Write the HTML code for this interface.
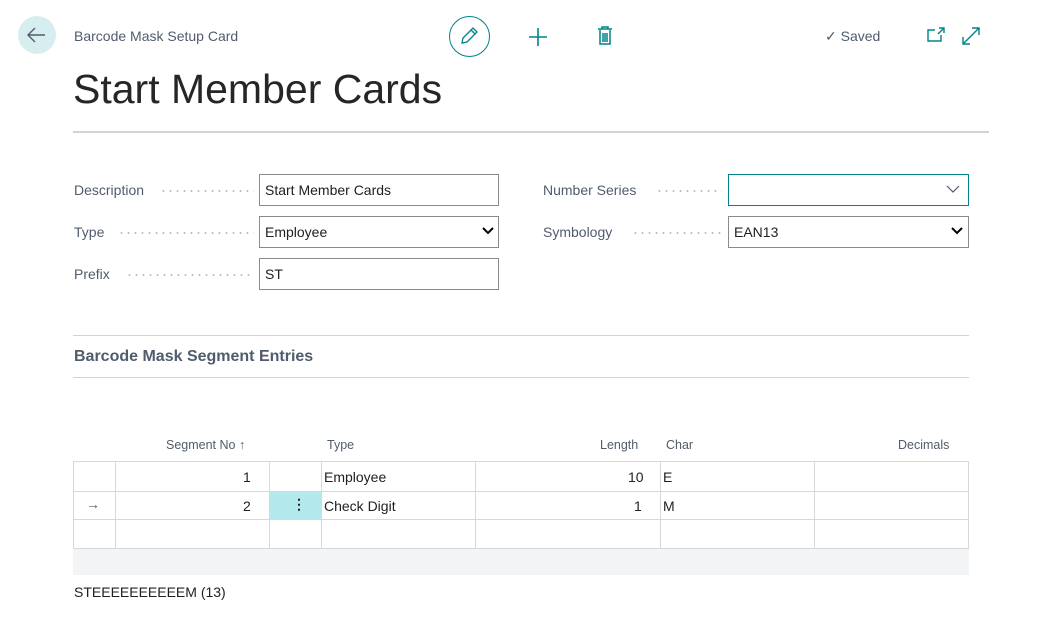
<!DOCTYPE html>
<html><head><style>
body{margin:0;width:1062px;height:624px;background:#fff;font-family:"Liberation Sans",sans-serif;color:#212121;position:relative;overflow:hidden}
.a{position:absolute}
.lbl{font-size:14px;color:#505c6d}
.dots{height:2px;background:radial-gradient(circle,#bbb 0.8px,transparent 1px) 0 0/7px 2px repeat-x}
.inp{position:absolute;border:1px solid #8a8a8a;box-sizing:border-box;height:32px;font-size:14px;padding:7px 0 0 5px;color:#212121}
.hd{font-size:12.5px;color:#505c6d}
.cell{position:absolute;font-size:14px}
</style></head><body>
<div class="a" style="left:18px;top:16px;width:38px;height:38px;border-radius:50%;background:#d6eef0"></div>
<svg class="a" style="left:25px;top:25px" width="22" height="20"><path d="M20 10H3M10 3L3 10l7 7" fill="none" stroke="#505c6d" stroke-width="1.4"/></svg>
<div class="a lbl" style="left:74px;top:28px">Barcode Mask Setup Card</div>
<div class="a" style="left:449px;top:16px;width:39px;height:39px;border-radius:50%;border:1px solid #008489"></div>
<svg class="a" style="left:459px;top:26px" width="20" height="20"><path d="M3 17l1-5L14 2l4 4L8 16zM12 4l4 4" fill="none" stroke="#008489" stroke-width="1.3"/></svg>
<svg class="a" style="left:528px;top:27px" width="20" height="20"><path d="M10 1v18M1 10h18" stroke="#008489" stroke-width="1.6"/></svg>
<svg class="a" style="left:597px;top:26px" width="16" height="20"><path d="M1 3h14M5 3V1h6v2M3 4v14h10V4M6 7v9M8 7v9M10 7v9" fill="none" stroke="#008489" stroke-width="1.5"/></svg>
<div class="a" style="left:825px;top:28px;font-size:14px;color:#505c6d">✓ Saved</div>
<svg class="a" style="left:926px;top:26px" width="20" height="18"><path d="M9 4H2v11h13V9M13 2h5v5M18 2l-6 6" fill="none" stroke="#008489" stroke-width="1.4"/></svg>
<svg class="a" style="left:961px;top:26px" width="20" height="20"><path d="M2 18L18 2M11 2h7v7M2 11v7h7" fill="none" stroke="#008489" stroke-width="1.4"/></svg>
<div class="a" style="left:73px;top:66px;font-size:41px;color:#262626;letter-spacing:0px">Start Member Cards</div>
<div class="a" style="left:73px;top:131px;width:916px;height:2px;background:#d0d3d8"></div>

<div class="a lbl" style="left:74px;top:182px">Description</div><div class="a dots" style="left:160px;top:190px;width:94px"></div>
<div class="inp" style="left:259px;top:174px;width:240px">Start Member Cards</div>
<div class="a lbl" style="left:74px;top:224px">Type</div><div class="a dots" style="left:118px;top:232px;width:136px"></div>
<div class="inp" style="left:259px;top:216px;width:240px">Employee</div>
<svg class="a" style="left:482px;top:227px" width="12" height="8"><path d="M1 1l5 5 5-5" fill="none" stroke="#000" stroke-width="2"/></svg>
<div class="a lbl" style="left:74px;top:266px">Prefix</div><div class="a dots" style="left:126px;top:274px;width:128px"></div>
<div class="inp" style="left:259px;top:258px;width:240px">ST</div>

<div class="a lbl" style="left:543px;top:182px">Number Series</div><div class="a dots" style="left:656px;top:190px;width:66px"></div>
<div class="inp" style="left:728px;top:174px;width:241px;border-color:#008489"></div>
<svg class="a" style="left:946px;top:185px" width="14" height="9"><path d="M1 1l6 6 6-6" fill="none" stroke="#505c6d" stroke-width="1.2"/></svg>
<div class="a lbl" style="left:543px;top:224px">Symbology</div><div class="a dots" style="left:632px;top:232px;width:90px"></div>
<div class="inp" style="left:728px;top:216px;width:241px">EAN13</div>
<svg class="a" style="left:951px;top:227px" width="12" height="8"><path d="M1 1l5 5 5-5" fill="none" stroke="#000" stroke-width="2"/></svg>

<div class="a" style="left:73px;top:335px;width:896px;height:1px;background:#d0d3d8"></div>
<div class="a" style="left:74px;top:348px;font-size:16px;font-weight:bold;color:#505c6d">Barcode Mask Segment Entries</div>
<div class="a" style="left:73px;top:377px;width:896px;height:1px;background:#d0d3d8"></div>

<div class="a hd" style="left:166px;top:438px">Segment No ↑</div>
<div class="a hd" style="left:327px;top:438px">Type</div>
<div class="a hd" style="left:600px;top:438px">Length</div>
<div class="a hd" style="left:666px;top:438px">Char</div>
<div class="a hd" style="left:898px;top:438px">Decimals</div>

<svg class="a" style="left:73px;top:461px" width="897" height="89">
<g stroke="#d8d8d8" stroke-width="1" fill="none">
<rect x="0.5" y="0.5" width="895" height="87"/>
<path d="M0 30.5h896M0 58.5h896M42.5 0v88M196.5 0v88M248.5 0v88M402.5 0v88M587.5 0v88M741.5 0v88"/>
</g>
<rect x="197" y="31" width="51" height="27" fill="#b3e8ec"/>
</svg>
<div class="cell" style="left:243px;top:469px">1</div>
<div class="cell" style="left:324px;top:469px">Employee</div>
<div class="cell" style="left:628px;top:469px">10</div>
<div class="cell" style="left:663px;top:469px">E</div>
<div class="cell" style="left:86px;top:496px;color:#505c6d">→</div>
<div class="cell" style="left:243px;top:498px">2</div>
<div class="cell" style="left:292px;top:496px;font-weight:bold">⋮</div>
<div class="cell" style="left:324px;top:498px">Check Digit</div>
<div class="cell" style="left:634px;top:498px">1</div>
<div class="cell" style="left:663px;top:498px">M</div>
<div class="a" style="left:73px;top:549px;width:896px;height:26px;background:#f3f4f6"></div>
<div class="a" style="left:74px;top:584px;font-size:14px">STEEEEEEEEEEM (13)</div>
</body></html>
